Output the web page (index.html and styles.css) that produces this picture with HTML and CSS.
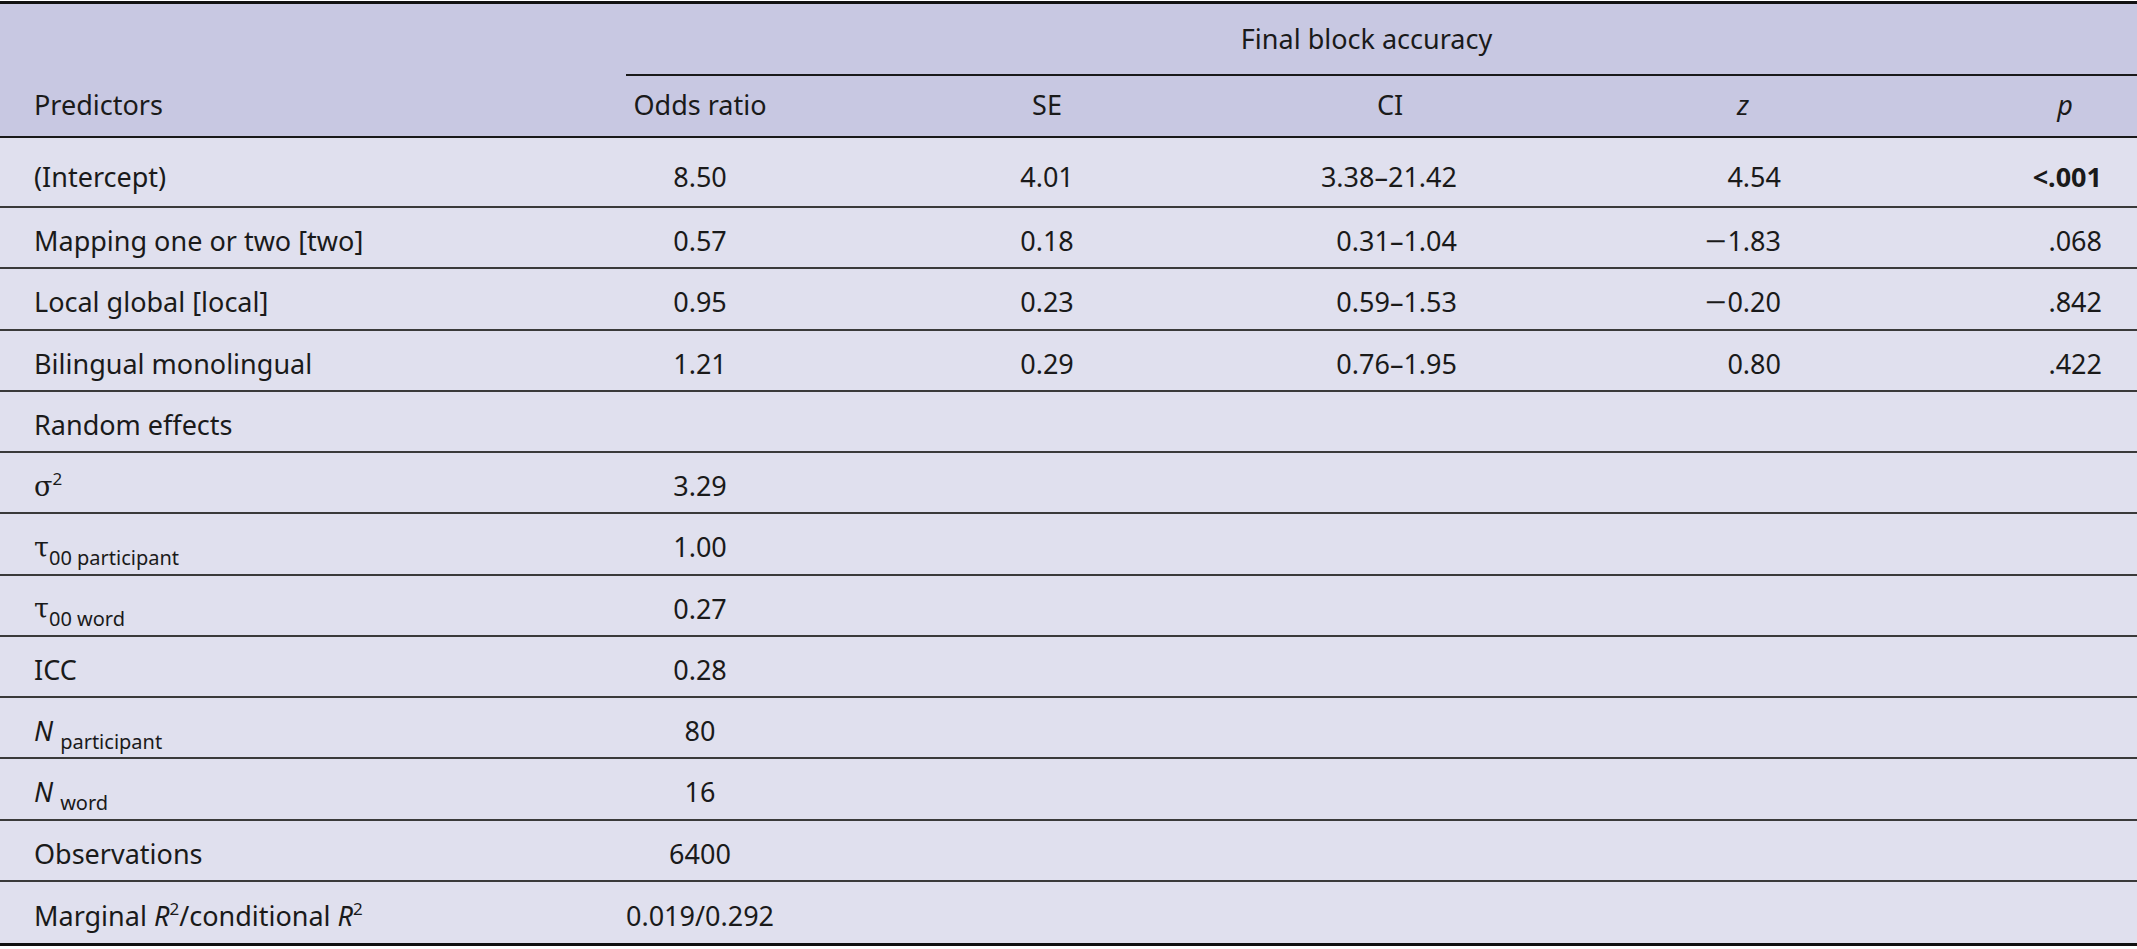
FILE: index.html
```html
<!DOCTYPE html>
<html lang="en">
<head>
<meta charset="utf-8">
<title>Final block accuracy</title>
<link rel="stylesheet" href="styles.css">
</head>
<body>
<div class="tbl">
  <div class="head">
    <div class="hrow1">
      <div class="c0"></div>
      <div class="span">Final block accuracy</div>
    </div>
    <div class="row hrow2">
      <div class="c0">Predictors</div>
      <div class="c1">Odds ratio</div>
      <div class="c2">SE</div>
      <div class="c3 hc">CI</div>
      <div class="c4 hz"><i>z</i></div>
      <div class="c5 hp"><i>p</i></div>
    </div>
  </div>
  <div class="body">
    <div class="row first">
      <div class="c0">(Intercept)</div>
      <div class="c1">8.50</div>
      <div class="c2">4.01</div>
      <div class="c3">3.38–21.42</div>
      <div class="c4">4.54</div>
      <div class="c5"><b>&lt;.001</b></div>
    </div>
    <div class="row">
      <div class="c0">Mapping one or two [two]</div>
      <div class="c1">0.57</div>
      <div class="c2">0.18</div>
      <div class="c3">0.31–1.04</div>
      <div class="c4"><span class="minus">−</span>1.83</div>
      <div class="c5">.068</div>
    </div>
    <div class="row">
      <div class="c0">Local global [local]</div>
      <div class="c1">0.95</div>
      <div class="c2">0.23</div>
      <div class="c3">0.59–1.53</div>
      <div class="c4"><span class="minus">−</span>0.20</div>
      <div class="c5">.842</div>
    </div>
    <div class="row">
      <div class="c0">Bilingual monolingual</div>
      <div class="c1">1.21</div>
      <div class="c2">0.29</div>
      <div class="c3">0.76–1.95</div>
      <div class="c4">0.80</div>
      <div class="c5">.422</div>
    </div>
    <div class="row">
      <div class="c0">Random effects</div>
      <div class="c1"></div><div class="c2"></div><div class="c3"></div><div class="c4"></div><div class="c5"></div>
    </div>
    <div class="row">
      <div class="c0"><span class="greek">σ</span><sup>2</sup></div>
      <div class="c1">3.29</div>
      <div class="c2"></div><div class="c3"></div><div class="c4"></div><div class="c5"></div>
    </div>
    <div class="row">
      <div class="c0"><span class="greek">τ</span><sub>00 participant</sub></div>
      <div class="c1">1.00</div>
      <div class="c2"></div><div class="c3"></div><div class="c4"></div><div class="c5"></div>
    </div>
    <div class="row">
      <div class="c0"><span class="greek">τ</span><sub>00 word</sub></div>
      <div class="c1">0.27</div>
      <div class="c2"></div><div class="c3"></div><div class="c4"></div><div class="c5"></div>
    </div>
    <div class="row">
      <div class="c0">ICC</div>
      <div class="c1">0.28</div>
      <div class="c2"></div><div class="c3"></div><div class="c4"></div><div class="c5"></div>
    </div>
    <div class="row">
      <div class="c0"><i>N</i> <sub>participant</sub></div>
      <div class="c1">80</div>
      <div class="c2"></div><div class="c3"></div><div class="c4"></div><div class="c5"></div>
    </div>
    <div class="row">
      <div class="c0"><i>N</i> <sub>word</sub></div>
      <div class="c1">16</div>
      <div class="c2"></div><div class="c3"></div><div class="c4"></div><div class="c5"></div>
    </div>
    <div class="row">
      <div class="c0">Observations</div>
      <div class="c1">6400</div>
      <div class="c2"></div><div class="c3"></div><div class="c4"></div><div class="c5"></div>
    </div>
    <div class="row last">
      <div class="c0">Marginal <i>R</i><sup>2</sup>/conditional <i>R</i><sup>2</sup></div>
      <div class="c1">0.019/0.292</div>
      <div class="c2"></div><div class="c3"></div><div class="c4"></div><div class="c5"></div>
    </div>
  </div>
</div>
</body>
</html>
```

FILE: styles.css
```css
html, body {
  margin: 0;
  padding: 0;
  background: #ffffff;
}

body {
  font-family: "Noto Sans", "Open Sans", sans-serif;
  font-size: 27px;
  color: #1a1a1a;
}

.tbl {
  width: 2137px;
  border-top: 3px solid #111111;
  border-bottom: 3px solid #111111;
  margin-top: 1px;
}

.head {
  background: #c8c8e2;
}

.body {
  background: #e0e0ee;
}

.hrow1 {
  display: grid;
  grid-template-columns: 626px 1fr;
  height: 72px;
}

.span {
  display: flex;
  align-items: center;
  justify-content: center;
  padding-right: 30px;
  padding-bottom: 2px;
  border-bottom: 2px solid #1a1a1a;
  box-sizing: border-box;
}

.row {
  display: grid;
  grid-template-columns: 626px 148px 546px 140px 326px 351px;
  align-items: center;
  height: 61.25px;
  box-sizing: border-box;
  border-bottom: 2px solid #3a3a3a;
  padding-top: 6px;
  line-height: 1;
}

.hrow2 {
  height: 62px;
  padding-top: 0;
  padding-bottom: 4px;
  border-bottom: 2px solid #1a1a1a;
}

.row.first {
  height: 70px;
  padding-top: 9px;
}

.row.last {
  border-bottom: none;
}

.c0 {
  padding-left: 34px;
  white-space: nowrap;
}

.c1, .c2 {
  text-align: center;
}

.c3 {
  text-align: right;
  padding-right: 3px;
}

.c4 {
  text-align: right;
  padding-right: 5px;
}

.c5 {
  text-align: right;
  padding-right: 35px;
}

.hc {
  text-align: center;
  padding-right: 0;
}

.hz {
  padding-right: 37px;
}

.hp {
  padding-right: 64px;
}

.minus {
  display: inline-block;
  transform: scaleX(1.4);
  margin-right: 4px;
}

b {
  font-weight: 700;
}

sup {
  font-size: 17px;
  vertical-align: 11px;
  line-height: 0;
}

sub {
  font-size: 20px;
  vertical-align: -8px;
  line-height: 0;
}

.greek {
  font-family: "DejaVu Serif", serif;
  font-size: 27px;
}
```
